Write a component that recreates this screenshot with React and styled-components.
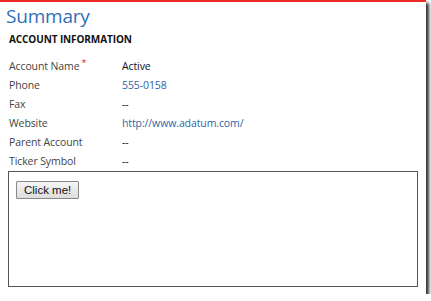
import React from "react";
import styled, { createGlobalStyle } from "styled-components";

const Global = createGlobalStyle`
  html, body { margin: 0; padding: 0; background: #ffffff; }
  body { font-family: "Open Sans", "Noto Sans", sans-serif; }
`;

const Frame = styled.div`
  width: 426px;
  height: 294px;
  box-sizing: border-box;
  background: #fff;
  border-top: 2px solid #ee2a2a;
  box-shadow: 3px 3px 3px 0 rgba(0, 0, 0, 0.8);
  display: flex;
  flex-direction: column;
`;

const Title = styled.h1`
  margin: 3px 0 0 6px;
  font-family: "Open Sans", sans-serif;
  font-weight: 400;
  font-size: 19px;
  line-height: 22px;
  color: #2f6fba;
  letter-spacing: -0.2px;
`;

const Section = styled.h2`
  margin: 5px 0 0 9px;
  font-family: "Open Sans", sans-serif;
  font-weight: 700;
  font-size: 10px;
  line-height: 14px;
  color: #111;
  letter-spacing: -0.1px;
`;

const Fields = styled.div`
  margin: 10px 0 0 9px;
  display: grid;
  grid-template-columns: 113px 1fr;
  grid-auto-rows: 19px;
  align-items: center;
`;

const Label = styled.div`
  font-size: 10.5px;
  color: #444;
  letter-spacing: -0.1px;
`;

const Req = styled.span`
  color: #e0242a;
  font-size: 9px;
  position: relative;
  top: -4px;
  margin-left: 2px;
`;

const Value = styled.div`
  font-size: 10.5px;
  color: ${(p) => (p.$link ? "#2e64a8" : "#111")};
  letter-spacing: -0.1px;
`;

const Box = styled.div`
  margin: 1px 0 0 8px;
  width: 410px;
  height: 116px;
  box-sizing: border-box;
  border: 1px solid #555;
  padding: 5px 7px;
`;

const Button = styled.button`
  font-family: "Liberation Sans", Arial, sans-serif;
  font-size: 11.5px;
  color: #111;
  padding: 0 7px;
  height: 18px;
  background: linear-gradient(#f6f6f6, #dddddd);
  border: 1px solid #888;
  border-radius: 1px;
`;

const rows = [
  ["Account Name", "Active", false, true],
  ["Phone", "555-0158", true],
  ["Fax", "--"],
  ["Website", "http://www.adatum.com/", true],
  ["Parent Account", "--"],
  ["Ticker Symbol", "--"],
];

export default function App() {
  return (
    <>
      <Global />
      <Frame>
        <Title>Summary</Title>
        <Section>ACCOUNT INFORMATION</Section>
        <Fields>
          {rows.map(([l, v, link, req]) => (
            <React.Fragment key={l}>
              <Label>
                {l}
                {req && <Req>*</Req>}
              </Label>
              <Value $link={link}>{v}</Value>
            </React.Fragment>
          ))}
        </Fields>
        <Box>
          <Button>Click me!</Button>
        </Box>
      </Frame>
    </>
  );
}
